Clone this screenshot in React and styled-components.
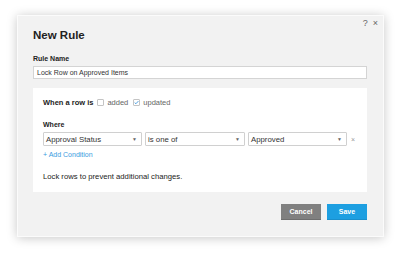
import styled, { createGlobalStyle } from "styled-components";

const Global = createGlobalStyle`
  body {
    margin: 0;
    background: #fff;
    font-family: "Liberation Sans", Arial, sans-serif;
    color: #222;
  }
`;

const Page = styled.div`
  padding: 15px 16px 18px 17px;
`;

const Dialog = styled.div`
  width: 367px;
  height: 222px;
  box-sizing: border-box;
  background: #f2f2f2;
  border: 1px solid #fbfbfb;
  box-shadow: 0 1px 10px rgba(0, 0, 0, 0.22);
  padding: 0 16px 0 15px;
  display: flex;
  flex-direction: column;
`;

const TopBar = styled.div`
  height: 12px;
  box-sizing: border-box;
  padding-top: 2px;
  margin-right: -11px;
  display: flex;
  justify-content: flex-end;
  gap: 5px;
  font-size: 9px;
  line-height: 10px;
  color: #666;
`;

const Title = styled.h1`
  margin: 0;
  font-size: 11.5px;
  line-height: 14px;
  font-weight: bold;
  color: #222;
`;

const Label = styled.div`
  font-size: 7px;
  line-height: 9px;
  font-weight: bold;
  color: #222;
  margin-top: ${(p) => p.$top || 0}px;
`;

const TextInput = styled.div`
  margin-top: 3px;
  height: 13px;
  box-sizing: border-box;
  background: #fff;
  border: 1px solid #d4d4d4;
  padding: 0 3px;
  font-size: 7px;
  line-height: 11px;
  color: #333;
`;

const Panel = styled.div`
  margin-top: 9px;
  height: 104px;
  box-sizing: border-box;
  background: #fff;
  padding: 9px 10px 0 10px;
  display: flex;
  flex-direction: column;
`;

const Row = styled.div`
  display: flex;
  align-items: center;
  height: 10px;
  font-size: 7.5px;
  color: #444;
`;

const RowLabel = styled.span`
  font-weight: bold;
  color: #222;
  margin-right: 4px;
`;

const Check = styled.span`
  width: 7px;
  height: 7px;
  box-sizing: border-box;
  border: 1px solid #c4c4c4;
  border-radius: 1px;
  background: #fff;
  display: flex;
  align-items: center;
  justify-content: center;
  margin-right: 3px;
`;

const CheckText = styled.span`
  margin-right: 5px;
  color: #666;
`;

const Selects = styled.div`
  margin-top: 3.5px;
  display: flex;
  align-items: center;
  gap: 3px;
`;

const Select = styled.div`
  width: ${(p) => p.$w}px;
  height: 14px;
  box-sizing: border-box;
  border: 1px solid #d0d0d0;
  border-radius: 1px;
  background: #fff;
  padding: 0 4px 0 2px;
  display: flex;
  align-items: center;
  justify-content: space-between;
  font-size: 7.8px;
  color: #333;
`;

const Caret = styled.span`
  font-size: 5px;
  color: #666;
`;

const Remove = styled.span`
  font-size: 7px;
  color: #999;
  margin-left: 1px;
`;

const AddLink = styled.div`
  margin-top: 3.5px;
  font-size: 7px;
  line-height: 9px;
  color: #3a9be0;
`;

const Note = styled.div`
  margin-top: 13px;
  font-size: 7.7px;
  line-height: 9px;
  color: #222;
`;

const Footer = styled.div`
  margin-top: 12px;
  display: flex;
  justify-content: flex-end;
  gap: 6px;
`;

const Button = styled.div`
  width: 40px;
  height: 16px;
  display: flex;
  align-items: center;
  justify-content: center;
  background: ${(p) => (p.$primary ? "#1d9fe1" : "#808080")};
  border-bottom: 1px solid ${(p) => (p.$primary ? "#1a8fcc" : "#6e6e6e")};
  box-sizing: border-box;
  color: #fff;
  font-size: 7px;
  font-weight: bold;
`;

function CheckMark() {
  return (
    <svg width="6" height="5" viewBox="0 0 6 5">
      <path d="M0.8 2.6 L2.3 4 L5.3 0.8" fill="none" stroke="#2f8fdc" strokeWidth="1" />
    </svg>
  );
}

export default function App() {
  return (
    <Page>
      <Global />
      <Dialog>
        <TopBar>
          <span>?</span>
          <span>×</span>
        </TopBar>
        <Title>New Rule</Title>
        <Label $top={12}>Rule Name</Label>
        <TextInput>Lock Row on Approved Items</TextInput>
        <Panel>
          <Row>
            <RowLabel>When a row is</RowLabel>
            <Check />
            <CheckText>added</CheckText>
            <Check>
              <CheckMark />
            </Check>
            <CheckText>updated</CheckText>
          </Row>
          <Label $top={12.5}>Where</Label>
          <Selects>
            <Select $w={99}>
              Approval Status<Caret>▼</Caret>
            </Select>
            <Select $w={100}>
              is one of<Caret>▼</Caret>
            </Select>
            <Select $w={99}>
              Approved<Caret>▼</Caret>
            </Select>
            <Remove>×</Remove>
          </Selects>
          <AddLink>+ Add Condition</AddLink>
          <Note>Lock rows to prevent additional changes.</Note>
        </Panel>
        <Footer>
          <Button>Cancel</Button>
          <Button $primary>Save</Button>
        </Footer>
      </Dialog>
    </Page>
  );
}
